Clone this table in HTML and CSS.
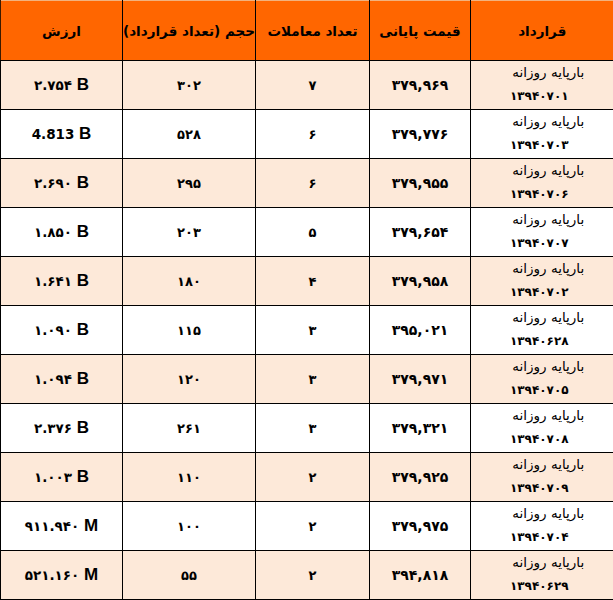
FILE: index.html
```html
<!DOCTYPE html>
<html lang="fa">
<head>
<meta charset="utf-8">
<link rel="stylesheet" href="styles.css">
</head>
<body>
<table class="grid" dir="rtl">
  <colgroup>
    <col class="c-contract"><col class="c-price"><col class="c-deals"><col class="c-vol"><col class="c-val">
  </colgroup>
  <thead>
    <tr>
      <th>قرارداد</th>
      <th>قیمت پایانی</th>
      <th>تعداد معاملات</th>
      <th>حجم (تعداد قرارداد)</th>
      <th>ارزش</th>
    </tr>
  </thead>
  <tbody>
    <tr class="alt"><td class="contract"><div class="l1">بارپایه روزانه</div><div class="l2">۱۳۹۴۰۷۰۱</div></td><td class="price">۳۷۹,۹۶۹</td><td>۷</td><td>۳۰۲</td><td><span class="val" dir="ltr">۲.۷۵۴ <span class="unit">B</span></span></td></tr>
    <tr><td class="contract"><div class="l1">بارپایه روزانه</div><div class="l2">۱۳۹۴۰۷۰۳</div></td><td class="price">۳۷۹,۷۷۶</td><td>۶</td><td>۵۲۸</td><td><span class="val" dir="ltr">4.813 <span class="unit">B</span></span></td></tr>
    <tr class="alt"><td class="contract"><div class="l1">بارپایه روزانه</div><div class="l2">۱۳۹۴۰۷۰۶</div></td><td class="price">۳۷۹,۹۵۵</td><td>۶</td><td>۲۹۵</td><td><span class="val" dir="ltr">۲.۶۹۰ <span class="unit">B</span></span></td></tr>
    <tr><td class="contract"><div class="l1">بارپایه روزانه</div><div class="l2">۱۳۹۴۰۷۰۷</div></td><td class="price">۳۷۹,۶۵۴</td><td>۵</td><td>۲۰۳</td><td><span class="val" dir="ltr">۱.۸۵۰ <span class="unit">B</span></span></td></tr>
    <tr class="alt"><td class="contract"><div class="l1">بارپایه روزانه</div><div class="l2">۱۳۹۴۰۷۰۲</div></td><td class="price">۳۷۹,۹۵۸</td><td>۴</td><td>۱۸۰</td><td><span class="val" dir="ltr">۱.۶۴۱ <span class="unit">B</span></span></td></tr>
    <tr><td class="contract"><div class="l1">بارپایه روزانه</div><div class="l2">۱۳۹۴۰۶۲۸</div></td><td class="price">۳۹۵,۰۲۱</td><td>۳</td><td>۱۱۵</td><td><span class="val" dir="ltr">۱.۰۹۰ <span class="unit">B</span></span></td></tr>
    <tr class="alt"><td class="contract"><div class="l1">بارپایه روزانه</div><div class="l2">۱۳۹۴۰۷۰۵</div></td><td class="price">۳۷۹,۹۷۱</td><td>۳</td><td>۱۲۰</td><td><span class="val" dir="ltr">۱.۰۹۴ <span class="unit">B</span></span></td></tr>
    <tr><td class="contract"><div class="l1">بارپایه روزانه</div><div class="l2">۱۳۹۴۰۷۰۸</div></td><td class="price">۳۷۹,۳۲۱</td><td>۳</td><td>۲۶۱</td><td><span class="val" dir="ltr">۲.۳۷۶ <span class="unit">B</span></span></td></tr>
    <tr class="alt"><td class="contract"><div class="l1">بارپایه روزانه</div><div class="l2">۱۳۹۴۰۷۰۹</div></td><td class="price">۳۷۹,۹۲۵</td><td>۲</td><td>۱۱۰</td><td><span class="val" dir="ltr">۱.۰۰۳ <span class="unit">B</span></span></td></tr>
    <tr><td class="contract"><div class="l1">بارپایه روزانه</div><div class="l2">۱۳۹۴۰۷۰۴</div></td><td class="price">۳۷۹,۹۷۵</td><td>۲</td><td>۱۰۰</td><td><span class="val" dir="ltr">۹۱۱.۹۴۰ <span class="unit">M</span></span></td></tr>
    <tr class="alt"><td class="contract"><div class="l1">بارپایه روزانه</div><div class="l2">۱۳۹۴۰۶۲۹</div></td><td class="price">۳۹۴,۸۱۸</td><td>۲</td><td>۵۵</td><td><span class="val" dir="ltr">۵۲۱.۱۶۰ <span class="unit">M</span></span></td></tr>
  </tbody>
</table>
</body>
</html>
```
FILE: styles.css
```css
html, body {
  margin: 0;
  padding: 0;
  background: #ffffff;
}
.grid {
  border-collapse: collapse;
  table-layout: fixed;
  width: 613px;
  font-family: "DejaVu Sans", sans-serif;
  color: #000;
  border-top: 1px solid #f2b27e;
}
.c-contract { width: 143px; }
.c-price { width: 101px; }
.c-deals { width: 114px; }
.c-vol { width: 133px; }
.c-val { width: 122px; }
.grid th {
  background: #ff6600;
  height: 59px;
  padding: 0;
  font-size: 13.5px;
  font-weight: bold;
  text-align: center;
  border-left: 1px solid #000;
  border-bottom: 1px solid #000;
}
.grid th:last-child { border-left: 1px solid #3a1a00; }
.grid td {
  height: 48px;
  padding: 0;
  text-align: center;
  vertical-align: middle;
  font-size: 13px;
  font-weight: bold;
  border-left: 1px solid #000;
  border-bottom: 1px solid #000;
  background: #ffffff;
}
.grid tr.alt td { background: #fde9d9; }
.grid td.price {
  font-size: 14px;
  letter-spacing: 0.6px;
}
.grid td.contract {
  vertical-align: top;
  font-weight: normal;
}
.l1 {
  height: 22px;
  line-height: 22px;
  font-size: 13.5px;
  font-weight: normal;
  padding-left: 12px;
}
.l2 {
  height: 26px;
  line-height: 26px;
  font-size: 12px;
  font-weight: bold;
  padding-right: 6px;
}
.val {
  font-weight: bold;
  font-size: 13.5px;
}
.unit {
  font-family: "Liberation Sans", Arial, sans-serif;
  font-size: 17px;
  font-weight: bold;
}
```
